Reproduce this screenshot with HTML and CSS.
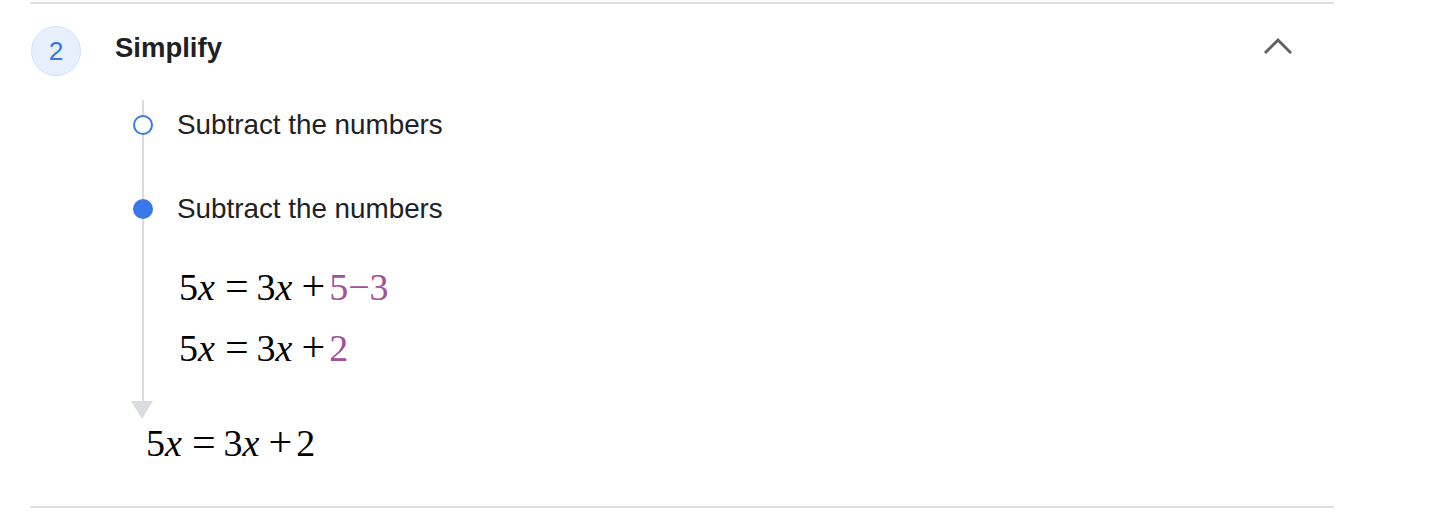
FILE: index.html
```html
<!DOCTYPE html>
<html lang="en">
<head>
<meta charset="utf-8">
<title>Simplify</title>
<link rel="stylesheet" href="styles.css">
</head>
<body>
<section class="card">
  <header class="step-head">
    <div class="step-num">2</div>
    <h2 class="step-title">Simplify</h2>
    <svg class="chevron" width="28" height="18" viewBox="0 0 28 18" aria-hidden="true">
      <polyline points="2,15 14,3 26,15" fill="none" stroke="#5f6368" stroke-width="3" stroke-linecap="square"/>
    </svg>
  </header>
  <div class="timeline">
    <div class="sub">
      <span class="dot dot-hollow"></span>
      <span class="sub-text">Subtract the numbers</span>
    </div>
    <div class="sub sub-second">
      <span class="dot dot-filled"></span>
      <span class="sub-text">Subtract the numbers</span>
    </div>
    <div class="math-block">
      <div class="eq">5<i>x</i><span class="rel">=</span>3<i>x</i><span class="op">+</span><span class="hl">5−3</span></div>
      <div class="eq">5<i>x</i><span class="rel">=</span>3<i>x</i><span class="op">+</span><span class="hl">2</span></div>
    </div>
  </div>
  <div class="arrow"></div>
  <div class="eq result">5<i>x</i><span class="rel">=</span>3<i>x</i><span class="op">+</span>2</div>
</section>
</body>
</html>
```
FILE: styles.css
```css
html, body {
  margin: 0;
  padding: 0;
  background: #ffffff;
}

body {
  font-family: "Liberation Sans", Arial, sans-serif;
  color: #202124;
}

.card {
  margin: 2px 0 0 30px;
  width: 1304px;
  border-top: 2px solid #e0e0e0;
  border-bottom: 2px solid #e0e0e0;
  padding-bottom: 40px;
}

.step-head {
  display: flex;
  align-items: center;
  padding: 22px 0 0 1px;
  height: 50px;
}

.step-num {
  width: 48px;
  height: 48px;
  border: 1px solid #d2e3fc;
  background: #e8f0fe;
  border-radius: 50%;
  color: #3b78e7;
  font-size: 26.5px;
  display: flex;
  align-items: center;
  justify-content: center;
}

.step-title {
  margin: 0 0 6px 34px;
  font-size: 27.5px;
  font-weight: bold;
  color: #202124;
}

.chevron {
  margin: 0 42px 10px auto;
  display: block;
}

.timeline {
  margin: 24px 0 0 112px;
  border-left: 2px solid #dadce0;
  height: 301px;
}

.sub {
  display: flex;
  align-items: center;
  height: 50px;
}

.sub-second {
  margin-top: 34px;
}

.dot {
  box-sizing: border-box;
  width: 20px;
  height: 20px;
  border-radius: 50%;
  margin-left: -11px;
  flex: none;
}

.dot-hollow {
  background: #ffffff;
  border: 2px solid #3b78e7;
}

.dot-filled {
  background: #3b78e7;
}

.sub-text {
  margin-left: 24px;
  font-size: 27.8px;
  line-height: 50px;
  color: #202124;
}

.math-block {
  margin: 22px 0 0 35px;
}

.eq {
  font-family: "Liberation Serif", "Times New Roman", serif;
  font-size: 38px;
  line-height: 60px;
  color: #000000;
  white-space: nowrap;
}

.eq i {
  font-style: italic;
}

.rel {
  font-size: 42px;
  margin: 0 8px 0 10px;
}

.op {
  font-size: 42px;
  margin: 0 4px 0 9px;
}

.hl {
  color: #a0509c;
}

.arrow {
  width: 0;
  height: 0;
  margin-left: 101px;
  border-left: 11.5px solid transparent;
  border-right: 11.5px solid transparent;
  border-top: 18px solid #dadce0;
}

.result {
  margin-left: 116px;
  line-height: 46px;
}
```
